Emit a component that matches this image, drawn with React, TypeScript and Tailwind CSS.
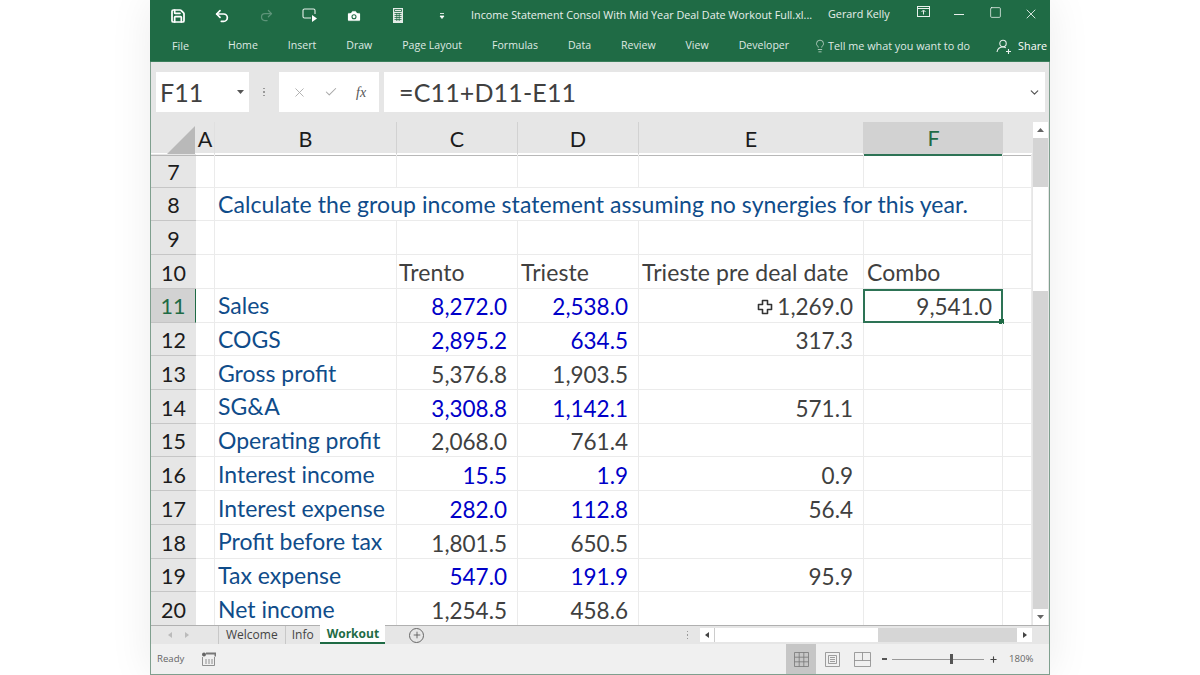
import { Save, Undo2, Redo2, Camera, ChevronDown, X, Check, Square, Lightbulb, Plus } from "lucide-react";

const GRID_COLS = "grid grid-cols-[45px_19px_182px_121px_121px_225px_139px_29px]";

type Row = { n: number; label?: string; c?: string; d?: string; e?: string; f?: string; cBlue?: boolean; dBlue?: boolean };

const rows: Row[] = [
  { n: 7 },
  { n: 8 },
  { n: 9 },
  { n: 10 },
  { n: 11, label: "Sales", c: "8,272.0", d: "2,538.0", e: "1,269.0", f: "9,541.0", cBlue: true, dBlue: true },
  { n: 12, label: "COGS", c: "2,895.2", d: "634.5", e: "317.3", cBlue: true, dBlue: true },
  { n: 13, label: "Gross profit", c: "5,376.8", d: "1,903.5" },
  { n: 14, label: "SG&A", c: "3,308.8", d: "1,142.1", e: "571.1", cBlue: true, dBlue: true },
  { n: 15, label: "Operating profit", c: "2,068.0", d: "761.4" },
  { n: 16, label: "Interest income", c: "15.5", d: "1.9", e: "0.9", cBlue: true, dBlue: true },
  { n: 17, label: "Interest expense", c: "282.0", d: "112.8", e: "56.4", cBlue: true, dBlue: true },
  { n: 18, label: "Profit before tax", c: "1,801.5", d: "650.5" },
  { n: 19, label: "Tax expense", c: "547.0", d: "191.9", e: "95.9", cBlue: true, dBlue: true },
  { n: 20, label: "Net income", c: "1,254.5", d: "458.6" },
];

const cell = "border-r border-b border-[#ebebeb] flex items-center whitespace-nowrap";
const textCell = "text-[23px] tracking-[0.1px]";

function NumCell({ value, blue }: { value?: string; blue?: boolean }) {
  return (
    <div className={`${cell} justify-end pr-[10px] pt-[5px] ${blue ? "text-[#0000c8]" : "text-[#404040]"}`}>{value}</div>
  );
}

function SheetRow({ row }: { row: Row }) {
  const selected = row.n === 11;
  return (
    <div className={`${GRID_COLS} h-[33.72px] text-[22.5px] leading-none`}>
      <div
        className={`flex items-center justify-center border-b pt-[4px] text-[21.5px] ${
          selected
            ? "bg-[#d2d2d2] text-[#1f6b45] border-b-[#c4c4c4] border-r border-r-[#1f6b45]"
            : "bg-[#e6e6e6] text-[#1c1c1c] border-[#c6c6c6]"
        }`}
      >
        {row.n}
      </div>
      {row.n === 8 ? (
        <>
          <div className={cell} />
          <div className={`${cell} text-[23px] tracking-[0.07px] col-span-5 pl-[3px] pt-[1px] text-[#0f4c8a]`}>
            Calculate the group income statement assuming no synergies for this year.
          </div>
          <div className={cell} />
        </>
      ) : row.n === 10 ? (
        <>
          <div className={cell} />
          <div className={cell} />
          <div className={`${cell} ${textCell} pl-[2px] pt-[1px] text-[#404040]`}>Trento</div>
          <div className={`${cell} ${textCell} pl-[3px] pt-[1px] text-[#404040]`}>Trieste</div>
          <div className={`${cell} ${textCell} pl-[3px] pt-[1px] text-[#404040]`}>Trieste pre deal date</div>
          <div className={`${cell} ${textCell} pl-[3px] pt-[1px] text-[#404040]`}>Combo</div>
          <div className={cell} />
        </>
      ) : (
        <>
          <div className={cell} />
          <div className={`${cell} text-[23px] pl-[3px] pt-[1px] text-[#0f4c8a]`}>{row.label}</div>
          <NumCell value={row.c} blue={row.cBlue} />
          <NumCell value={row.d} blue={row.dBlue} />
          <div className={`${cell} relative justify-end pr-[10px] pt-[5px] text-[#404040]`}>
            {selected && (
              <svg className="absolute left-[118px] top-[10px]" width="16" height="16" viewBox="0 0 16 16">
                <path d="M5.5 1.5h5v4h4v5h-4v4h-5v-4h-4v-5h4z" fill="#fff" stroke="#333" strokeWidth="1.6" strokeLinejoin="round" />
              </svg>
            )}
            {row.e}
          </div>
          <div className={`${cell} relative justify-end pr-[10px] pt-[5px] text-[#404040]`}>
            {row.f}
            {selected && (
              <div className="absolute -left-px top-0 -right-px -bottom-px border-2 border-[#2d7355]">
                <div className="absolute -right-[3px] -bottom-[3px] size-[5px] bg-[#1f6b45]" />
              </div>
            )}
          </div>
          <div className={cell} />
        </>
      )}
    </div>
  );
}

function TitleIcon({ children }: { children: React.ReactNode }) {
  return <div className="w-[44px] flex items-center justify-center">{children}</div>;
}

const ribbonTabs = ["Home", "Insert", "Draw", "Page Layout", "Formulas", "Data", "Review", "View", "Developer"];

function ColHead({ label, selected, noLine }: { label: string; selected?: boolean; noLine?: boolean }) {
  return (
    <div
      className={`flex items-center justify-center border-b text-[21.5px] ${
        selected
          ? "bg-[#d2d2d2] text-[#1f6b45] border-b-2 border-b-[#2d7355]"
          : `border-r ${noLine ? "border-r-[#e0e0e0]" : "border-r-[#d2d2d2]"} border-b-[#b8b8b8] text-[#1c1c1c]`
      }`}
    >
      {label}
    </div>
  );
}

export default function App() {
  return (
    <div className="w-[1200px] h-[675px] bg-white flex justify-center overflow-hidden">
      <div className="w-[900px] h-[675px] flex flex-col border-x border-b border-[#7f9f8e] shadow-[0_0_40px_rgba(0,0,0,0.08)] font-['Lato',sans-serif]">
        {/* Title bar */}
        <div className="h-[31px] bg-[#1f6b45] flex items-center text-white font-['Open_Sans',sans-serif] text-[10.8px] whitespace-nowrap -mx-px">
          <div className="flex pl-[6px]">
            <TitleIcon><Save size={16} strokeWidth={2.6} /></TitleIcon>
            <TitleIcon><Undo2 size={16} strokeWidth={2.6} /></TitleIcon>
            <TitleIcon><Redo2 size={15} strokeWidth={2} className="text-[#5d9479]" /></TitleIcon>
            <TitleIcon>
              <svg width="16" height="15" viewBox="0 0 16 15" fill="none" stroke="#e6efe9" strokeWidth="1.1">
                <path d="M9 10H2.5A1.5 1.5 0 0 1 1 8.5v-6A1.5 1.5 0 0 1 2.5 1h9A1.5 1.5 0 0 1 13 2.5V6" />
                <path d="M10 7l5 3.5L10 14z" fill="#fff" stroke="none" />
              </svg>
            </TitleIcon>
            <TitleIcon><Camera size={16} fill="#fff" stroke="#1f6b45" strokeWidth={1.6} /></TitleIcon>
            <TitleIcon>
              <svg width="10" height="15" viewBox="0 0 10 15">
                <rect x="0" y="0" width="10" height="15" fill="#e4ece7" />
                <path d="M1.5 1.5h7v2h-7zM1.5 5.5h7M1.5 7.5h7M1.5 9.5h7M1.5 11.5h7M3.8 5v8M6.2 5v8" stroke="#1f6b45" strokeWidth="0.8" fill="none" />
              </svg>
            </TitleIcon>
            <TitleIcon>
              <svg width="6" height="6" viewBox="0 0 6 6"><path d="M1 0.5h4M1 3h4L3 5.5z" stroke="#fff" fill="#fff" strokeWidth="0.8" /></svg>
            </TitleIcon>
          </div>
          <div className="ml-[7px] w-[357px] shrink-0 text-[#e8f0ec]">Income Statement Consol With Mid Year Deal Date Workout Full.xl...</div>
          <div className="w-[77px] shrink-0 text-[#e8f0ec] -mt-[3px]">Gerard Kelly</div>
          <div className="flex -mt-[3px]">
            <div className="w-[36px] flex justify-center">
              <svg width="13" height="11" viewBox="0 0 13 11" fill="none" stroke="#e8f0ec">
                <rect x="0.5" y="0.5" width="12" height="10" />
                <path d="M0.5 2.5h12M6.5 8.5v-4M4.5 6l2-2 2 2" />
              </svg>
            </div>
            <div className="w-[36px] flex justify-center">
              <div className="w-[10px] h-px bg-[#e8f0ec] self-center" />
            </div>
            <div className="w-[36px] flex justify-center"><Square size={13} strokeWidth={1.3} /></div>
            <div className="w-[36px] flex justify-center"><X size={16} strokeWidth={1.2} /></div>
          </div>
        </div>

        {/* Ribbon tabs */}
        <div className="h-[31px] bg-[#1f6b45] flex items-center text-[#dfe9e3] font-['Open_Sans',sans-serif] text-[10.8px] whitespace-nowrap -mx-px border-b border-[#3b7f5c] relative">
          <div className="ml-[22px] w-[56px] shrink-0">File</div>
          <div className="flex gap-[30px] shrink-0 text-[10.55px]">
            {ribbonTabs.map((t) => (
              <div key={t}>{t}</div>
            ))}
          </div>
          <Lightbulb size={14} strokeWidth={1.2} className="ml-[24px] shrink-0" />
          <div className="ml-[1px] w-[168px] shrink-0 pt-px">Tell me what you want to do</div>
          <svg className="shrink-0" width="16" height="15" viewBox="0 0 16 15" fill="none" stroke="#e8f0ec" strokeWidth="1.1">
            <circle cx="7" cy="4.5" r="3.2" />
            <path d="M1 13c.5-3 3-5 6-5 1 0 2 .2 2.8.7M10 12.5h5M12.5 10v5" />
          </svg>
          <div className="ml-[6px] pt-px text-white">Share</div>
        </div>

        {/* Formula bar */}
        <div className="h-[60px] bg-[#e6e6e6] flex items-center pl-[5px] pr-[4px]">
          <div className="w-[93px] h-[40px] bg-white flex items-center pl-[4px] pr-[5px] justify-between text-[25px] text-[#404040] font-['Lato',sans-serif]">
            <span className="pt-px">F11</span>
            <svg width="7" height="4" viewBox="0 0 7 4"><path d="M0 0h7L3.5 4z" fill="#555" /></svg>
          </div>
          <div className="w-[30px] flex flex-col items-center gap-[2px]">
            <span className="size-[1.5px] bg-[#999]" />
            <span className="size-[1.5px] bg-[#999]" />
            <span className="size-[1.5px] bg-[#999]" />
          </div>
          <div className="w-[100px] h-[40px] bg-white flex items-center justify-around px-[4px]">
            <X size={15} strokeWidth={1.4} className="text-[#a8a8a8]" />
            <Check size={14} strokeWidth={1.8} className="text-[#a8a8a8]" />
            <span className="font-['Liberation_Serif',serif] italic text-[14px] text-[#555]">fx</span>
          </div>
          <div className="ml-[5px] flex-1 h-[40px] bg-white flex items-center pl-[15px] pr-[4px] justify-between text-[25px] text-[#404040]">
            <span className="pt-px tracking-[0.15px]">=C11+D11-E11</span>
            <ChevronDown size={13} strokeWidth={2.2} className="text-[#555]" />
          </div>
        </div>

        {/* Sheet */}
        <div className="flex h-[503px] bg-[#e6e6e6]">
          <div className="w-[881px] shrink-0 overflow-hidden">
            <div className={`${GRID_COLS} h-[31px] bg-[#e6e6e6]`}>
              <div className="relative border-b border-[#b8b8b8]">
                <div className="absolute right-[1px] bottom-[1px] w-0 h-0 border-t-[28px] border-t-transparent border-r-[28px] border-r-[#b9b9b9]" />
              </div>
              <ColHead label="A" noLine />
              <ColHead label="B" />
              <ColHead label="C" />
              <ColHead label="D" />
              <ColHead label="E" />
              <ColHead label="F" selected />
              <div className="border-b border-[#b8b8b8]" />
            </div>
            <div className="h-[472px] pt-px bg-white overflow-hidden font-['Lato',sans-serif]">
              {rows.map((r) => (
                <SheetRow key={r.n} row={r} />
              ))}
            </div>
          </div>

          {/* Vertical scrollbar */}
          <div className="w-[19px] flex flex-col pl-px pr-px">
            <div className="h-[16px] bg-white flex items-center justify-center">
              <svg width="7" height="4" viewBox="0 0 7 4"><path d="M0 4h7L3.5 0z" fill="#666" /></svg>
            </div>
            <div className="h-[49px] bg-[#d4d4d4]" />
            <div className="h-[104px] bg-white" />
            <div className="flex-1 bg-[#d4d4d4]" />
            <div className="h-[16px] bg-white flex items-center justify-center">
              <svg width="7" height="4" viewBox="0 0 7 4"><path d="M0 0h7L3.5 4z" fill="#666" /></svg>
            </div>
          </div>
        </div>

        {/* Tabs bar */}
        <div className="h-[19px] bg-[#e6e6e6] border-t border-[#b0b0b0] flex items-stretch text-[12px] font-['Open_Sans',sans-serif]">
          <div className="w-[67px] flex items-center gap-[13px] pl-[17px]">
            <svg width="4" height="6" viewBox="0 0 4 6"><path d="M4 0v6L0 3z" fill="#bbb" /></svg>
            <svg width="4" height="6" viewBox="0 0 4 6"><path d="M0 0v6l4-3z" fill="#bbb" /></svg>
          </div>
          <div className="px-[7px] border-l border-r border-[#c8c8c8] flex items-center text-[#444]">Welcome</div>
          <div className="px-[6px] flex items-center text-[#444]">Info</div>
          <div className="pl-[7px] pr-[6px] -mt-px bg-white border-b-2 border-[#1f6b45] flex items-center font-bold text-[#1f6b45]">Workout</div>
          <div className="ml-[24px] flex items-center">
            <div className="size-[15px] rounded-full border border-[#666] flex items-center justify-center">
              <Plus size={10} strokeWidth={2} className="text-[#555]" />
            </div>
          </div>
          <div className="flex-1" />
          <div className="w-[25px] flex flex-col items-center justify-center gap-[2px]">
            <span className="size-[1.5px] bg-[#999]" />
            <span className="size-[1.5px] bg-[#999]" />
            <span className="size-[1.5px] bg-[#999]" />
          </div>
          <div className="flex w-[332px] my-[2px] mr-[17px] bg-[#d6d6d6]">
            <div className="w-[15px] bg-white flex items-center justify-center border-r border-[#ccc]">
              <svg width="4" height="6" viewBox="0 0 4 6"><path d="M4 0v6L0 3z" fill="#444" /></svg>
            </div>
            <div className="w-[163px] bg-white" />
            <div className="flex-1" />
            <div className="w-[15px] bg-white flex items-center justify-center">
              <svg width="4" height="6" viewBox="0 0 4 6"><path d="M0 0v6l4-3z" fill="#444" /></svg>
            </div>
          </div>
        </div>

        {/* Status bar */}
        <div className="flex-1 bg-[#f0f0f0] flex items-center text-[9.6px] text-[#666] font-['Open_Sans',sans-serif]">
          <div className="ml-[6px] w-[44px]">Ready</div>
          <svg width="15" height="14" viewBox="0 0 15 14" fill="none" stroke="#777">
            <circle cx="3" cy="2.5" r="2" fill="#666" stroke="none" />
            <path d="M5 1.5h9.5v3" strokeWidth="2" />
            <path d="M1.5 5v8.5h12V5M5 7v5M8 7v5M11 7v5" strokeWidth="0.8" />
          </svg>
          <div className="flex-1" />
          <div className="w-[30px] h-full bg-[#c6c6c6] flex items-center justify-center">
            <svg width="15" height="15" viewBox="0 0 15 15" fill="none" stroke="#777" strokeWidth="0.8">
              <path d="M.5.5h14v14H.5zM5.2.5v14M9.8.5v14M.5 5.2h14M.5 9.8h14" />
            </svg>
          </div>
          <div className="w-[33px] flex justify-center">
            <svg width="15" height="15" viewBox="0 0 15 15" fill="none" stroke="#888" strokeWidth="0.8">
              <path d="M.5.5h14v14H.5zM3.5 3.5h8v8h-8zM5 5.5h5M5 7.5h5M5 9.5h5" />
            </svg>
          </div>
          <div className="w-[27px] flex justify-center">
            <svg width="17" height="15" viewBox="0 0 17 15" fill="none" stroke="#888" strokeWidth="0.8">
              <path d="M.5.5h16v14H.5zM8.5.5v8M.5 8.5h16" />
            </svg>
          </div>
          <div className="ml-[6px] w-[120px] relative flex items-center">
            <div className="w-[5px] h-[1.5px] bg-[#555] mr-[5px]" />
            <div className="w-[92px] h-px bg-[#999]" />
            <div className="absolute left-[68px] top-1/2 -translate-y-1/2 w-[3px] h-[10px] bg-[#555]" />
            <Plus size={9} strokeWidth={3} className="ml-[5px] text-[#444]" />
          </div>
          <div className="ml-[7px] mr-[16px] w-[24px] text-right text-[#666]">180%</div>
        </div>
      </div>
    </div>
  );
}
